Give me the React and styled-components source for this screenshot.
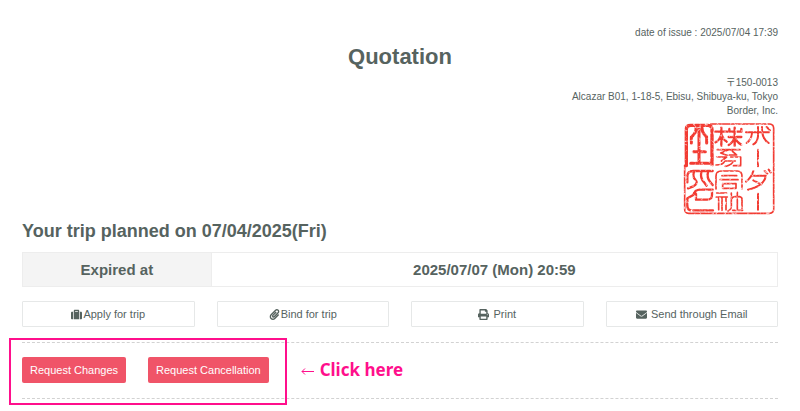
import React from "react";
import styled, { createGlobalStyle } from "styled-components";
import { FaSuitcase, FaPaperclip, FaPrint, FaEnvelope } from "react-icons/fa";

const GlobalStyle = createGlobalStyle`
  *, *::before, *::after { box-sizing: border-box; }
  body {
    margin: 0;
    background: #fff;
    color: #56635f;
    font-family: "Liberation Sans", Arial, "Noto Sans CJK JP", sans-serif;
    font-size: 10px;
    line-height: 14px;
  }
`;

const Page = styled.main`
  padding: 26px 22px 12px;
`;

const IssueDate = styled.p`
  margin: 0;
  text-align: right;
`;

const Title = styled.h1`
  margin: 4px 0 6px;
  font-size: 22px;
  line-height: 26px;
  text-align: center;
`;

const Issuer = styled.address`
  display: flex;
  flex-direction: column;
  align-items: flex-end;
  font-style: normal;
`;

const Seal = styled.svg`
  width: 96px;
  height: 96px;
  margin-top: 3px;
  fill: none;
  stroke: #f23a30;
  stroke-linecap: round;
  stroke-linejoin: round;
`;

const TripHeading = styled.h2`
  margin: 2px 0 9px;
  font-size: 18px;
  line-height: 24px;
`;

const Summary = styled.table`
  width: 100%;
  border-collapse: collapse;
  table-layout: fixed;
  font-size: 15px;
  line-height: 33px;
  font-weight: bold;
  text-align: center;

  th, td {
    padding: 0;
    border: 1px solid #ededed;
  }
  th {
    width: 25%;
    background: #f4f4f4;
  }
`;

const Tools = styled.div`
  display: grid;
  grid-template-columns: repeat(4, 1fr);
  gap: 22px;
  margin: 14px 0 15px;
`;

const ToolButton = styled.button`
  display: flex;
  align-items: center;
  justify-content: center;
  gap: ${({ $gap }) => $gap}px;
  height: 26px;
  padding: 0;
  border: 1px solid #e6e8e8;
  border-radius: 1px;
  background: #fff;
  color: inherit;
  font-family: inherit;
  font-size: 11px;
  cursor: pointer;
`;

const Requests = styled.section`
  position: relative;
  display: flex;
  align-items: center;
  gap: 22px;
  padding: 14px 0 15px;
  border-top: 1px dashed #d2d2d2;
  border-bottom: 1px dashed #d2d2d2;
`;

const Highlight = styled.div`
  position: absolute;
  top: -5px;
  bottom: -7px;
  left: -13px;
  width: 278px;
  border: 2px solid #ff0f8c;
  pointer-events: none;
`;

const RequestButton = styled.button`
  height: 26px;
  padding: 0 8px;
  border: 0;
  border-radius: 2px;
  background: #f05468;
  color: #fff;
  font-family: inherit;
  font-size: 11px;
  cursor: pointer;
`;

const Callout = styled.p`
  display: flex;
  align-items: center;
  gap: 6px;
  margin: 0 0 0 10px;
  color: #ff0f8c;
  font-family: "Noto Sans", "Open Sans", sans-serif;
  font-size: 17px;
  line-height: 26px;
  font-weight: bold;
`;

const Arrow = styled.svg`
  width: 13px;
  height: 9px;
  margin-top: 2px;
  fill: none;
  stroke: currentColor;
`;

const tools = [
  { label: "Apply for trip", Icon: FaSuitcase, gap: 1 },
  { label: "Bind for trip", Icon: FaPaperclip, gap: 1 },
  { label: "Print", Icon: FaPrint, gap: 4 },
  { label: "Send through Email", Icon: FaEnvelope, gap: 4 },
];

function CompanySeal() {
  return (
    <Seal viewBox="24 18 288 288" role="img" aria-label="Company seal">
      <defs>
        <filter id="ink" x="-5%" y="-5%" width="110%" height="110%">
          <feTurbulence type="fractalNoise" baseFrequency="0.12" numOctaves="2" seed="4" result="grain" />
          <feDisplacementMap in="SourceGraphic" in2="grain" scale="3" xChannelSelector="R" yChannelSelector="G" result="rough" />
          <feColorMatrix in="grain" type="matrix" values="0 0 0 0 0  0 0 0 0 0  0 0 0 0 0  0 0 0 -3 2.6" result="wear" />
          <feComposite in="rough" in2="wear" operator="in" />
        </filter>
      </defs>
      <g filter="url(#ink)">
        <path strokeWidth="5" d="M110 27H286Q299 27 299 40V282Q299 294 286 295H44Q32 295 32 282V150" />
        <path strokeWidth="10" d="M37 152V42Q37 31 50 31H102Q114 31 114 44V150" />
        <path strokeWidth="9" d="M66 38Q68 54 52 66V84M84 38Q84 54 98 66V84M75 42V144M58 110H94M50 145H112" />
        <path strokeWidth="7" d="M116 168H58Q40 168 40 184V202M60 170Q54 188 66 196Q72 206 58 214L42 220M82 170Q78 188 90 202L98 212M102 170Q98 188 108 200L116 210" />
        <path strokeWidth="7" d="M116 224H78Q62 224 58 240L40 250V272Q40 286 54 286H117M66 236V254H98Q114 254 114 240V226" />
        <path strokeWidth="7" d="M142 38V92M124 50H160M142 58Q138 76 124 82M142 58Q148 74 158 80M182 38V92M166 42V50H202V42M164 66H202M182 66Q178 82 164 90M182 66Q188 82 202 89" />
        <path strokeWidth="5" d="M130 104H198M164 104L140 114L156 120H188L172 106M128 126H158L142 138M170 126H200V152H178M126 150Q148 150 152 138H184M154 154Q174 150 178 138" />
        <path strokeWidth="5" d="M126 222V184Q126 168 142 168H190Q204 168 204 184V222M144 182H188M138 194H192M146 206H186V220H146V206" />
        <path strokeWidth="5" d="M128 234H158M126 246H160M144 246V286M134 250V284M156 250V284M172 234V274Q172 284 162 288M190 232V248M174 250Q176 244 190 244Q204 244 204 252V280M190 254V286M176 286H206" />
        <path strokeWidth="6" d="M216 52H286M252 36V64Q250 82 238 88M234 56Q232 74 218 84M264 36Q262 70 284 84M278 36L288 46M252 104V154" />
        <path strokeWidth="6" d="M238 168Q232 188 216 200M236 182H276Q270 214 222 224M238 196L262 208M272 168L280 176M284 164L290 172M252 236V284" />
      </g>
    </Seal>
  );
}

export default function App() {
  return (
    <>
      <GlobalStyle />
      <Page>
        <IssueDate>date of issue : 2025/07/04 17:39</IssueDate>
        <Title>Quotation</Title>
        <Issuer>
          <span>〒150-0013</span>
          <span>Alcazar B01, 1-18-5, Ebisu, Shibuya-ku, Tokyo</span>
          <span>Border, Inc.</span>
          <CompanySeal />
        </Issuer>
        <TripHeading>Your trip planned on 07/04/2025(Fri)</TripHeading>
        <Summary>
          <tbody>
            <tr>
              <th scope="row">Expired at</th>
              <td>2025/07/07 (Mon) 20:59</td>
            </tr>
          </tbody>
        </Summary>
        <Tools>
          {tools.map(({ label, Icon, gap }) => (
            <ToolButton key={label} type="button" $gap={gap}>
              <Icon size={11} aria-hidden="true" />
              {label}
            </ToolButton>
          ))}
        </Tools>
        <Requests>
          <RequestButton type="button">Request Changes</RequestButton>
          <RequestButton type="button">Request Cancellation</RequestButton>
          <Callout>
            <Arrow viewBox="0 0 13 9" aria-hidden="true">
              <path d="M13 4.5H1M4 1.5L1 4.5L4 7.5" />
            </Arrow>
            Click here
          </Callout>
          <Highlight />
        </Requests>
      </Page>
    </>
  );
}
